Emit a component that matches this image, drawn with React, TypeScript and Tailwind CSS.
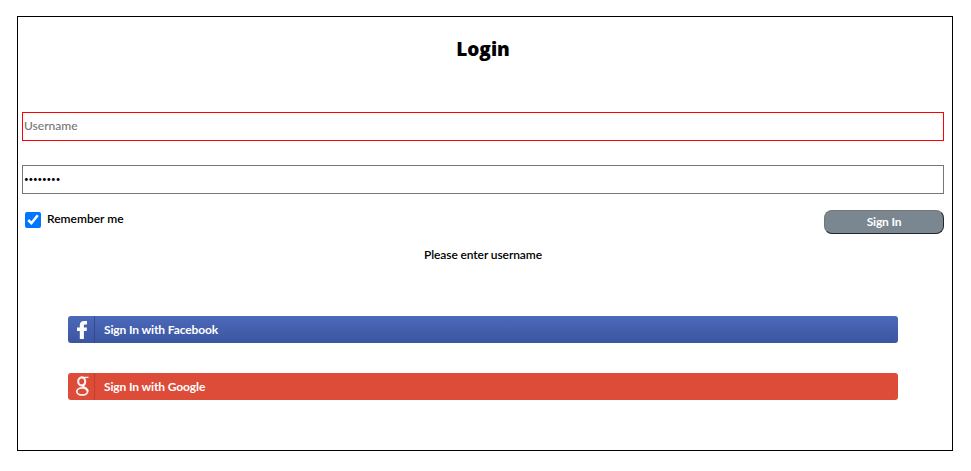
import React, { useState } from "react";

function FacebookMark() {
  return (
    <svg width="27" height="27" viewBox="0 0 27 27" className="block shrink-0">
      <path
        d="M11.8 23V15H9V11.6H11.8V9.2C11.8 6.2 13.5 5 16.3 5H19V8.4H17.4C16.2 8.4 15.9 8.8 15.9 9.8V11.6H19L18.6 15H15.9V23Z"
        fill="#fff"
      />
      <path d="M26.5 0V27" stroke="#36498e" strokeWidth="1" />
    </svg>
  );
}

function GoogleMark() {
  return (
    <svg width="27" height="27" viewBox="0 0 27 27" className="block shrink-0">
      <g fill="none" stroke="#fff" strokeOpacity="0.92">
        <ellipse cx="13.7" cy="8.4" rx="3.5" ry="4" strokeWidth="2.1" />
        <path d="M13.7 4.4H20.5" strokeWidth="1.3" />
        <path d="M16.8 10.5C16.3 12 14.9 12.3 14.9 13.2C14.9 14.4 19.6 15 19.6 18.2" strokeWidth="2" />
        <ellipse cx="14.2" cy="18.4" rx="5.4" ry="3.5" strokeWidth="1.8" />
      </g>
      <path d="M26.5 0V27" stroke="#bd4030" strokeWidth="1" />
    </svg>
  );
}

export default function App() {
  const [username, setUsername] = useState("");
  const [password, setPassword] = useState("password");
  const [remember, setRemember] = useState(true);

  return (
    <div className="h-[471px] w-[971px] bg-white pl-[17px] pt-4 font-[Lato,sans-serif] text-[12px] leading-4 text-black">
      <form
        className="flex h-[435px] w-[936px] flex-col border border-black pl-1 pr-2"
        onSubmit={(e) => e.preventDefault()}
      >
        <h1 className="mt-5 h-6 text-center font-['Open_Sans',sans-serif] text-[19px] font-extrabold leading-6">
          Login
        </h1>
        <input
          value={username}
          onChange={(e) => setUsername(e.target.value)}
          placeholder="Username"
          className="mt-[51px] h-[29px] w-full border border-[#ff0000] px-px pb-[3px] text-[12px] font-medium outline-none placeholder:text-[#757575]"
        />
        <input
          type="password"
          value={password}
          onChange={(e) => setPassword(e.target.value)}
          className="mt-6 h-[29px] w-full border border-[#767676] px-px pb-px text-[8px] tracking-[-0.12px] outline-none"
        />
        <div className="mt-4 flex h-6 justify-between">
          <label className="flex pl-[3px] pt-0.5">
            <input
              type="checkbox"
              checked={remember}
              onChange={() => setRemember(!remember)}
              className="h-4 w-4 accent-[#0075ff]"
            />
            <span className="-mt-px ml-1.5 whitespace-nowrap text-[12px] font-semibold">Remember me</span>
          </label>
          <button className="h-6 w-[120px] rounded-lg border border-b-[#20262a] border-l-[#767676] border-r-[#20262a] border-t-[#767676] bg-[#7b8790] text-[12px] font-bold leading-4 tracking-[-0.2px] text-white">
            Sign In
          </button>
        </div>
        <p className="mt-[13px] h-4 text-center text-[12px] font-semibold tracking-[-0.1px]">Please enter username</p>
        <button className="ml-[46px] mt-[53px] flex h-[27px] w-[830px] items-center rounded-[3px] bg-linear-to-b from-[#4c69ba] to-[#3b55a0] text-[12px] font-bold tracking-[-0.12px] text-white">
          <FacebookMark />
          <span className="ml-[9px] pt-px">Sign In with Facebook</span>
        </button>
        <button className="ml-[46px] mt-[30px] flex h-[27px] w-[830px] items-center rounded-[3px] bg-[#dd4b39] text-[12px] font-bold tracking-[-0.12px] text-white">
          <GoogleMark />
          <span className="ml-[9px] pt-px">Sign In with Google</span>
        </button>
      </form>
    </div>
  );
}
